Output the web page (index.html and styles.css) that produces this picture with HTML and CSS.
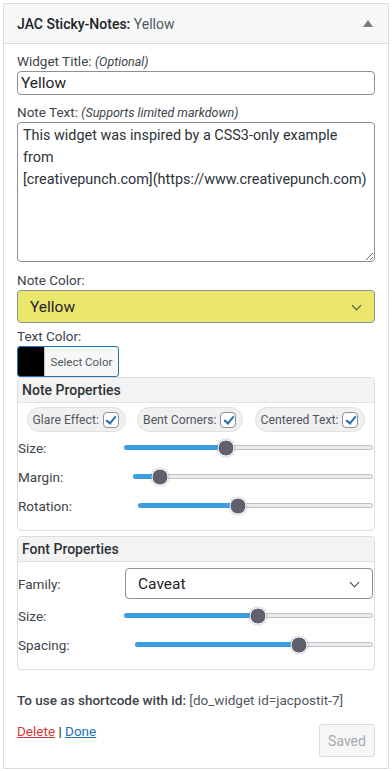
FILE: index.html
```html
<!DOCTYPE html>
<html lang="en">
<head>
  <meta charset="UTF-8">
  <meta name="viewport" content="width=device-width, initial-scale=1.0">
  <title>JAC Sticky-Notes widget</title>
  <link rel="stylesheet" href="styles.css">
</head>
<body>
  <div class="widget">
    <!-- widget header bar -->
    <div class="widget-top">
      <h3 class="widget-title">JAC Sticky-Notes:<span class="in-title"> Yellow</span></h3>
      <span class="toggle"></span>
    </div>

    <div class="widget-inside">
      <div class="field">
        <label>Widget Title: <em>(Optional)</em></label>
        <input type="text" class="text-input" value="Yellow">
      </div>

      <div class="field field-note">
        <label>Note Text: <em>(Supports limited markdown)</em></label>
        <textarea class="note-text">This widget was inspired by a CSS3-only example from
[creativepunch.com](https://www.creativepunch.com)</textarea>
      </div>

      <div class="field field-tight">
        <label>Note Color:</label>
        <div class="select select-yellow">Yellow<span class="chevron"></span></div>
      </div>

      <div class="field field-last">
        <label>Text Color:</label>
        <button class="color-button"><span class="swatch"></span><span class="color-text">Select Color</span></button>
      </div>

      <!-- note properties -->
      <div class="panel">
        <div class="panel-title">Note Properties</div>
        <div class="pills">
          <span class="pill">Glare Effect: <span class="check"></span></span>
          <span class="pill">Bent Corners: <span class="check"></span></span>
          <span class="pill">Centered Text: <span class="check"></span></span>
        </div>
        <div class="range-row">
          <span>Size:</span>
          <div class="range w-249"><span class="range-fill" style="width:41%"></span><span class="range-thumb" style="left:41%"></span></div>
        </div>
        <div class="range-row">
          <span>Margin:</span>
          <div class="range w-240"><span class="range-fill" style="width:11%"></span><span class="range-thumb" style="left:11%"></span></div>
        </div>
        <div class="range-row">
          <span>Rotation:</span>
          <div class="range w-235"><span class="range-fill" style="width:42.5%"></span><span class="range-thumb" style="left:42.5%"></span></div>
        </div>
      </div>

      <!-- font properties -->
      <div class="panel panel-font">
        <div class="panel-title">Font Properties</div>
        <div class="family-row">
          <span>Family:</span>
          <div class="select select-family">Caveat<span class="chevron"></span></div>
        </div>
        <div class="range-row">
          <span>Size:</span>
          <div class="range w-249"><span class="range-fill" style="width:54%"></span><span class="range-thumb" style="left:54%"></span></div>
        </div>
        <div class="range-row">
          <span>Spacing:</span>
          <div class="range w-238"><span class="range-fill" style="width:69%"></span><span class="range-thumb" style="left:69%"></span></div>
        </div>
      </div>

      <p class="shortcode"><strong>To use as shortcode with id:</strong> [do_widget id=jacpostit-7]</p>

      <div class="widget-actions">
        <div class="links"><a href="#" class="delete">Delete</a> | <a href="#" class="done">Done</a></div>
        <button class="saved" disabled>Saved</button>
      </div>
    </div>
  </div>
</body>
</html>
```

FILE: styles.css
```css
* {
  box-sizing: border-box;
}
body {
  margin: 3px;
  background-color: #fff;
  color: #3c434a;
  font-family: Roboto, "Liberation Sans", sans-serif;
  font-size: 13.5px;
}
.widget {
  border: 1px solid #dcdcde;
  background-color: #fff;
}
.widget-top {
  height: 40px;
  background-color: #f6f7f7;
  border-bottom: 1px solid #dcdcde;
  display: flex;
  align-items: center;
  justify-content: space-between;
  padding: 0 15px 0 13px;
}
.widget-title {
  margin: 0;
  font-size: 14px;
  font-weight: 500;
  color: #1d2327;
}
.in-title {
  font-weight: 400;
  color: #50575e;
}
/* small collapse arrow */
.toggle {
  width: 0;
  height: 0;
  border-left: 5px solid transparent;
  border-right: 5px solid transparent;
  border-bottom: 7px solid #787c82;
}
.widget-inside {
  padding: 9px 13px 11px;
}
.field {
  margin-bottom: 9px;
}
.field-note {
  margin-bottom: 10px;
}
.field-tight {
  margin-bottom: 5px;
}
.field-last {
  margin-bottom: 0;
}
.field label {
  display: block;
  line-height: 17px;
  margin-bottom: 1px;
  color: #3c434a;
}
.field em {
  font-size: 12.5px;
}
.text-input {
  display: block;
  width: 100%;
  height: 24px;
  margin: 0;
  padding: 0 3px;
  border: 1px solid #8c8f94;
  border-radius: 4px;
  font-family: inherit;
  font-size: 15.5px;
  color: #1d2327;
}
.note-text {
  display: block;
  width: 100%;
  height: 140px;
  margin: 0;
  padding: 2px 3px 2px 5px;
  border: 1px solid #8c8f94;
  border-radius: 4px;
  font-family: inherit;
  font-size: 14.4px;
  line-height: 22px;
  color: #2c3338;
  resize: vertical;
}
.select {
  position: relative;
  display: flex;
  align-items: center;
  border: 1px solid #8c8f94;
  border-radius: 4px;
  font-size: 15.5px;
  color: #1d2327;
}
.select-yellow {
  height: 33px;
  padding-left: 12px;
  background-color: #ebe66c;
}
.chevron {
  position: absolute;
  right: 14px;
  top: 50%;
  width: 7px;
  height: 7px;
  margin-top: -5px;
  border-right: 1.5px solid #3c434a;
  border-bottom: 1.5px solid #3c434a;
  transform: rotate(45deg);
}
.color-button {
  display: flex;
  width: 102px;
  height: 31px;
  padding: 0;
  border: 1px solid #2271b1;
  border-radius: 3px;
  background-color: #f6f7f7;
  overflow: hidden;
  font-family: inherit;
}
.swatch {
  width: 27px;
  height: 100%;
  background-color: #000;
  border-right: 1px solid #c3c4c7;
}
.color-text {
  flex: 1;
  align-self: center;
  font-size: 11.5px;
  color: #50575e;
}
.panel {
  border: 1px solid #dcdcde;
  border-radius: 4px;
  padding-bottom: 10px;
}
.panel-title {
  height: 25px;
  line-height: 24px;
  padding-left: 4px;
  background-color: #f3f3f4;
  border-bottom: 1px solid #e2e2e4;
  border-radius: 4px 4px 0 0;
  font-size: 14px;
  font-weight: 500;
  color: #2c3338;
}
.pills {
  display: flex;
  justify-content: space-around;
  padding: 4px 3px 0;
}
.pill {
  display: flex;
  align-items: center;
  gap: 4px;
  height: 25px;
  padding: 0 6px 0 5px;
  background-color: #f0f0f1;
  border: 1px solid #e0e0e2;
  border-radius: 13px;
  font-size: 12.2px;
  color: #50575e;
}
.check {
  position: relative;
  width: 16px;
  height: 16px;
  background-color: #fff;
  border: 1px solid #8c8f94;
  border-radius: 4px;
}
/* checkmark drawn with borders */
.check::after {
  content: "";
  position: absolute;
  left: 4.5px;
  top: 1px;
  width: 4px;
  height: 8px;
  border-right: 2px solid #2271b1;
  border-bottom: 2px solid #2271b1;
  transform: rotate(40deg);
}
.range-row {
  display: flex;
  align-items: center;
  justify-content: space-between;
  height: 29px;
  padding-right: 1px;
  color: #3c434a;
}
.panel .pills + .range-row {
  margin-top: 1px;
}
.range {
  position: relative;
  height: 5px;
  background-color: #ececee;
  border: 1px solid #c0c0c6;
  border-radius: 3px;
}
.w-249 { width: 249px; }
.w-240 { width: 240px; }
.w-238 { width: 238px; }
.w-235 { width: 235px; }
.range-fill {
  position: absolute;
  left: -1px;
  top: -1px;
  bottom: -1px;
  background-color: #3a9fe2;
  border-radius: 3px;
}
.range-thumb {
  position: absolute;
  top: 50%;
  width: 17px;
  height: 17px;
  background-color: #5f5f6e;
  border: 1px solid #fff;
  border-radius: 50%;
  box-shadow: 0 0 1px 1px rgba(0, 0, 0, 0.15);
  transform: translate(-50%, -50%);
}
.family-row {
  display: flex;
  align-items: center;
  justify-content: space-between;
  padding: 6px 1px 2px 0;
}
.select-family {
  width: 248px;
  height: 31px;
  padding-left: 12px;
  background-color: #fff;
}
.panel-font {
  margin-top: 5px;
  padding-bottom: 10px;
}
.shortcode {
  margin: 22px 0 0;
  font-size: 13.5px;
  color: #50575e;
}
.shortcode strong {
  font-weight: 500;
  color: #3c434a;
}
.widget-actions {
  display: flex;
  justify-content: space-between;
  align-items: flex-start;
  margin-top: 14px;
}
.links {
  font-size: 13.5px;
  color: #1d2327;
  padding-top: 1px;
}
.delete {
  color: #d63638;
}
.done {
  color: #2271b1;
}
.saved {
  width: 56px;
  height: 33px;
  margin-top: 2px;
  background-color: #f6f7f7;
  border: 1px solid #dcdcde;
  border-radius: 3px;
  color: #a7aaad;
  font-family: inherit;
  font-size: 14px;
}
```
